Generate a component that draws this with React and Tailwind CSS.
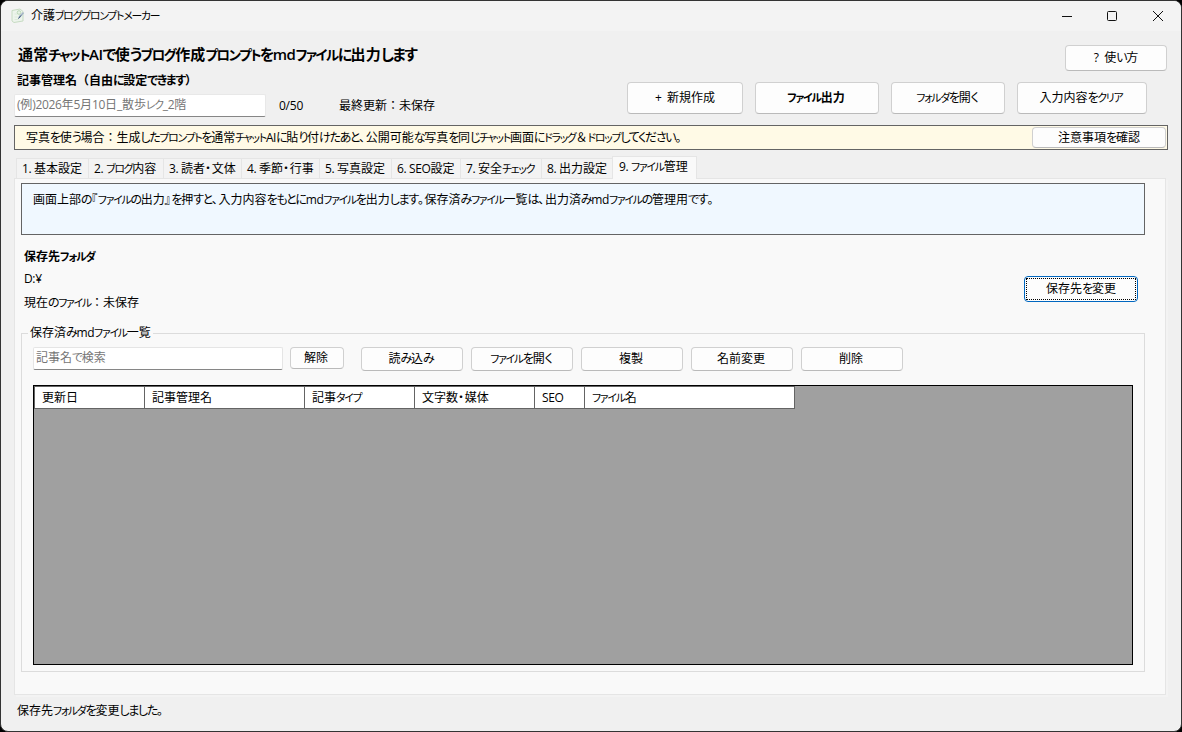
const tabs = [
  { label: '1. 基本設定', width: 'w-[72px]' },
  { label: '2. ブログ内容', width: 'w-[75px]' },
  { label: '3. 読者・文体', width: 'w-[78px]' },
  { label: '4. 季節・行事', width: 'w-[78px]' },
  { label: '5. 写真設定', width: 'w-[72px]' },
  { label: '6. SEO設定', width: 'w-[69px]' },
  { label: '7. 安全チェック', width: 'w-[81px]' },
  { label: '8. 出力設定', width: 'w-[71px]' },
];

const columns = [
  { label: '更新日', width: 'w-[110px]' },
  { label: '記事管理名', width: 'w-[160px]' },
  { label: '記事タイプ', width: 'w-[110px]' },
  { label: '文字数・媒体', width: 'w-[120px]' },
  { label: 'SEO', width: 'w-[50px]' },
  { label: 'ファイル名', width: 'w-[210px]' },
];

const fileActions = ['読み込み', 'ファイルを開く', '複製', '名前変更', '削除'];

// Kana is set narrower than kanji, as in a Japanese UI font
function Jp({ children }) {
  const runs = children.match(/[ァ-ヺー]+|[ぁ-ゖ]+|[、。『』・]+|[!-~ ]+|[^ァ-ヺーぁ-ゖ、。『』・!-~ ]+/g);
  return (
    <span className="whitespace-pre">
      {runs.map((run, index) => {
        let style = '';
        if (/[ァ-ヺー]/.test(run)) style = 'text-[0.9em] tracking-[-0.11em] [font-feature-settings:"palt"]';
        else if (/[ぁ-ゖ]/.test(run)) style = 'tracking-[-0.11em] [font-feature-settings:"palt"]';
        else if (/[、。『』・]/.test(run)) style = 'tracking-[0.05em] [font-feature-settings:"palt"]';
        else if (/[!-~]/.test(run)) style = 'tracking-[-0.03em]';
        return <span key={index} className={style}>{run}</span>;
      })}
    </span>
  );
}

function Button({ children, className = '' }) {
  return (
    <button
      className={`flex shrink-0 items-center justify-center rounded-[4px] border border-[#d0d0d0] border-b-[#bababa] bg-[#fdfdfd] ${className}`}
    >
      <Jp>{children}</Jp>
    </button>
  );
}

function AppIcon() {
  return (
    <svg width="14" height="16" viewBox="0 0 14 16" fill="none">
      <path d="M1 2.500 9 1l3 2.500v9.500l-9 1.500L1 13z" fill="#edf4ec" stroke="#c6dbc2" />
      <path d="M3.500 6h3M3.500 9h3M3.500 11.500h4" stroke="#dceada" />
      <circle cx="8" cy="4.500" r="1.800" fill="#e6f2e4" stroke="#bcd8b8" />
      <path d="m7 11 1-3 4-4 1 1.200-4 4.500z" fill="#a3b3c6" />
      <path d="m7.500 10.500 2.500-3" stroke="#3f5878" />
    </svg>
  );
}

function TitleBar() {
  return (
    <div className="flex h-[30px] shrink-0 items-center bg-[#f3f3f3] pl-[10px]">
      <AppIcon />
      <h1 className="ml-[6px] flex-1 font-normal"><Jp>介護ブログプロンプトメーカー</Jp></h1>
      <div className="flex items-center pr-[17px]">
        <svg width="102" height="12" viewBox="0 0 102 12" fill="none" stroke="#111">
          <path d="M0 6.500h10" />
          <rect x="45.500" y="1.500" width="9" height="9" rx="1" />
          <path d="m91 1 10 10M101 1l-10 10" />
        </svg>
      </div>
    </div>
  );
}

function Header() {
  return (
    <div className="flex h-[94px] shrink-0 justify-between">
      <div className="pl-[13px] pt-[11px]">
        <h2 className="pl-1 text-[15px] leading-[25px] font-semibold tracking-[0.01em]"><Jp>通常チャットAIで使うブログ作成プロンプトをmdファイルに出力します</Jp></h2>
        <p className="pl-[3px] leading-[25px] font-semibold"><Jp>記事管理名（自由に設定できます）</Jp></p>
        <div className="mt-px flex h-[23px] items-center">
          <div className="flex h-full w-[252px] items-center rounded-[2px] border border-[#e8e8e8] border-b-[#868686] bg-white pl-[2px] pb-[2px] text-[#767676]">
            <Jp>(例)2026年5月10日_散歩レク_2階</Jp>
          </div>
          <span className="ml-[13px] w-[60px] tracking-[-0.02em]">0/50</span>
          <span><Jp>最終更新：未保存</Jp></span>
        </div>
      </div>
      <div className="flex flex-col items-end pt-[14px] pr-[14px]">
        <Button className="h-[26px] w-[102px]">?  使い方</Button>
        <div className="mt-[11px] mr-5 flex gap-3">
          <Button className="h-8 w-[116px]">+  新規作成</Button>
          <Button className="h-8 w-[124px] pr-[2px] font-semibold">ファイル出力</Button>
          <Button className="h-8 w-[114px] pr-[2px]">フォルダを開く</Button>
          <Button className="h-8 w-[130px] pr-[2px]">入力内容をクリア</Button>
        </div>
      </div>
    </div>
  );
}

function FileTable() {
  return (
    <div className="mt-[14px] h-[280px] w-[1100px] border border-black bg-[#a0a0a0]">
      <div className="flex h-[23px] w-[761px] border-t border-l border-[#646464]">
        {columns.map((column) => (
          <div
            key={column.label}
            className={`flex h-[22px] shrink-0 items-center border-r border-b border-[#646464] bg-white pl-[7px] ${column.width}`}
          >
            <Jp>{column.label}</Jp>
          </div>
        ))}
      </div>
    </div>
  );
}

function FilePanel() {
  return (
    <div className="mr-[15px] ml-[13px] h-[517px] border border-[#e5e5e5] bg-[#f9f9f9] pt-1 pl-1.5 shadow-[2px_2px_0_#f3f3f3]">
      <div className="h-[52px] w-[1124px] border border-[#646464] bg-[#f0f8ff] pt-[7px] pl-[11px] leading-[18px]">
        <Jp>画面上部の『ファイルの出力』を押すと、入力内容をもとにmdファイルを出力します。保存済みファイル一覧は、出力済みmdファイルの管理用です。</Jp>
      </div>

      <div className="flex h-[89px] w-[1117px] items-start justify-between pl-[3px]">
        <div className="pt-[11px]">
          <h3 className="leading-[22px] font-semibold"><Jp>保存先フォルダ</Jp></h3>
          <p className="leading-[22px]"><Jp>D:¥</Jp></p>
          <p className="leading-[25px]"><Jp>現在のファイル：未保存</Jp></p>
        </div>
        <button className="mt-[41px] h-[26px] w-[114px] rounded-[4px] border border-[#0067c0] bg-[#fdfdfd] p-px">
          <span className="flex h-full items-center justify-center border border-dotted border-black"><Jp>保存先を変更</Jp></span>
        </button>
      </div>

      {/* Saved files */}
      <fieldset className="h-[348px] w-[1124px] border border-[#dcdcdc] pl-[11px]">
        <legend className="-ml-[5px] h-[18px] px-[2px] leading-[18px]"><Jp>保存済みmdファイル一覧</Jp></legend>
        <div className="mt-[5px] flex h-6 items-start">
          <div className="flex h-[23px] w-[250px] items-center rounded-[2px] border border-[#e5e5e5] border-b-[#868686] bg-white pl-[2px] pb-px text-[#767676]">
            <Jp>記事名で検索</Jp>
          </div>
          <Button className="ml-[7px] h-[22px] w-[54px] pr-[2px]">解除</Button>
          <div className="ml-[17px] flex gap-2">
            {fileActions.map((action) => (
              <Button key={action} className="h-6 w-[102px] pr-[2px]">{action}</Button>
            ))}
          </div>
        </div>
        <FileTable />
      </fieldset>
    </div>
  );
}

export default function App() {
  return (
    <div className="h-[732px] w-[1182px] bg-black text-[12px] text-black [font-family:'Open_Sans','Noto_Sans_CJK_JP',sans-serif]">
      <div className="flex h-full flex-col overflow-hidden rounded-[8px] border border-[#333] bg-[#f0f0f0]">
        <TitleBar />
        <Header />

        {/* Photo notice */}
        <div className="mr-[13px] ml-[13px] flex h-[25px] shrink-0 items-center justify-between border border-[#646464] bg-[#fffae6] pr-px pl-[11px]">
          <Jp>写真を使う場合：生成したプロンプトを通常チャットAIに貼り付けたあと、公開可能な写真を同じチャット画面にドラッグ＆ドロップしてください。</Jp>
          <Button className="h-[21px] w-[134px]">注意事項を確認</Button>
        </div>

        <div className="relative z-10 -mb-px ml-[15px] flex h-[29px] shrink-0 items-end">
          {tabs.map((tab) => (
            <div
              key={tab.label}
              className={`flex h-[21px] shrink-0 items-center border-t border-l border-b border-[#e5e5e5] bg-[#f3f3f3] pl-[5px] ${tab.width}`}
            >
              <Jp>{tab.label}</Jp>
            </div>
          ))}
          <div className="flex h-[23px] w-[85px] items-center border-t border-r border-l border-[#e5e5e5] bg-[#f9f9f9] pb-[2px] pl-1.5">
            <Jp>9. ファイル管理</Jp>
          </div>
        </div>
        <FilePanel />

        <p className="pt-[6px] pl-4 leading-[20px]"><Jp>保存先フォルダを変更しました。</Jp></p>
      </div>
    </div>
  );
}
